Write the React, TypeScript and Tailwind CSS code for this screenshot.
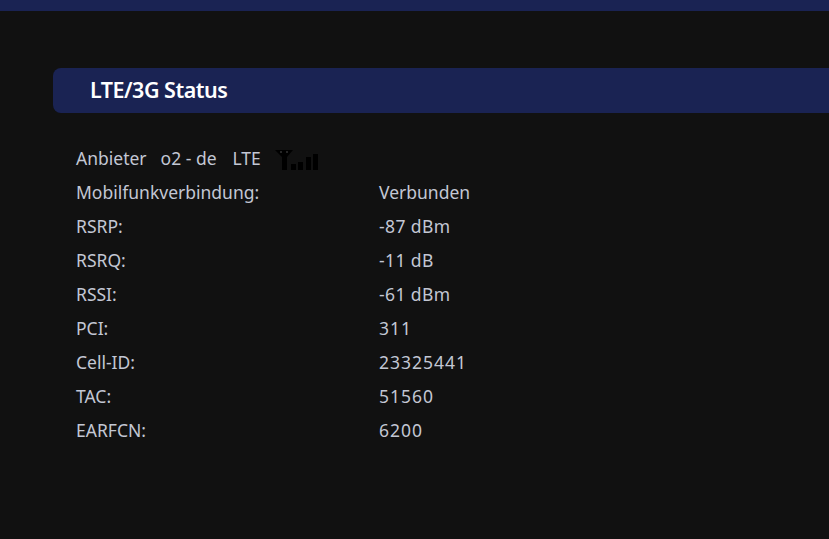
const rows = [
  { label: 'Mobilfunkverbindung:', value: 'Verbunden', spacing: 'tracking-normal' },
  { label: 'RSRP:', value: '-87 dBm', spacing: 'tracking-[0.4px]' },
  { label: 'RSRQ:', value: '-11 dB', spacing: 'tracking-[0.4px]' },
  { label: 'RSSI:', value: '-61 dBm', spacing: 'tracking-[0.4px]' },
  { label: 'PCI:', value: '311', spacing: 'tracking-[1px]' },
  { label: 'Cell-ID:', value: '23325441', spacing: 'tracking-[1px]' },
  { label: 'TAC:', value: '51560', spacing: 'tracking-[1px]' },
  { label: 'EARFCN:', value: '6200', spacing: 'tracking-[1px]' },
];

function SignalIcon() {
  return (
    <svg width="44" height="20" viewBox="0 0 44 20" className="ml-[14px] mt-[4px]">
      <path d="M0 0h18l-6 7v13H7V7z" fill="#000" />
      <circle cx="6" cy="2" r="1" fill="#333" />
      <circle cx="12" cy="2" r="1" fill="#333" />
      <rect x="16" y="14" width="5" height="6" fill="#000" />
      <rect x="23" y="12" width="5" height="8" fill="#000" />
      <rect x="31" y="7" width="5" height="13" fill="#000" />
      <rect x="38" y="4" width="5" height="16" fill="#000" />
    </svg>
  );
}

export default function App() {
  return (
    <div className="h-[539px] overflow-hidden bg-[#111111] font-['Noto_Sans',sans-serif] text-[17.5px] text-[#c3c7d4]">
      <div className="h-[11px] bg-[#1a2353]" />
      <div className="pl-[53px] pt-[57px]">
        <div className="flex h-[45px] items-center rounded-l-[8px] bg-[#1a2353] pl-[37px] text-[21.5px] font-semibold tracking-[-0.5px] text-white">
          LTE/3G Status
        </div>
        <div className="pl-[23px] pt-[28px]">
          <div className="flex h-[34px] items-center">
            <span>Anbieter</span>
            <span className="ml-[14px]">o2 - de</span>
            <span className="ml-[16px]">LTE</span>
            <SignalIcon />
          </div>
          {rows.map((row) => (
            <div key={row.label} className="flex h-[34px] items-center">
              <span className="w-[303px]">{row.label}</span>
              <span className={row.spacing}>{row.value}</span>
            </div>
          ))}
        </div>
      </div>
    </div>
  );
}
